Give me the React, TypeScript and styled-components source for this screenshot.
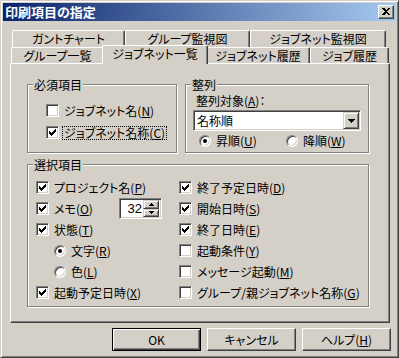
import React from 'react'
import styled, { createGlobalStyle } from 'styled-components'

const GlobalStyle = createGlobalStyle`
    html, body {
        margin: 0;
        padding: 0;
        background: #d4d0c8;
    }
    body {
        font-family: "Noto Sans CJK JP", "Noto Sans", sans-serif;
        font-size: 12px;
        font-feature-settings: "palt";
        color: #000;
    }
    * { box-sizing: border-box; }
`

const Window = styled.div`
    width: 399px;
    height: 358px;
    background: #d4d0c8;
    border: 1px solid;
    border-color: #d4d0c8 #404040 #404040 #d4d0c8;
    box-shadow: inset 1px 1px #fff, inset -1px -1px #808080;
    padding: 2px;
    display: flex;
    flex-direction: column;
`

const TitleBar = styled.div`
    height: 18px;
    background: linear-gradient(to right, #0a246a, #a6caf0);
    display: flex;
    align-items: center;
    justify-content: space-between;
    padding: 0 2px 0 2px;
`

const TitleText = styled.span`
    color: #fff;
    font-weight: bold;
    font-size: 13px;
    line-height: 18px;
`

const CloseButton = styled.div`
    width: 16px;
    height: 14px;
    background: #d4d0c8;
    border: 1px solid;
    border-color: #fff #404040 #404040 #fff;
    box-shadow: inset -1px -1px #808080;
    display: flex;
    align-items: center;
    justify-content: center;
    margin-top: -1px;
`

const Body = styled.div`
    padding: 9px 5px 4px 7px;
    display: flex;
    flex-direction: column;
`

const TabRow = styled.div<{ $indent: number; $h: number }>`
    display: flex;
    height: ${p => p.$h}px;
    margin-left: ${p => p.$indent}px;
`

const Tab = styled.div<{ $w: number; $active?: boolean }>`
    width: ${p => p.$w}px;
    height: ${p => (p.$active ? 'calc(100% + 3px)' : '100%')};
    margin: ${p => (p.$active ? '-2px -2px -1px -2px' : '0')};
    width: ${p => (p.$active ? p.$w + 4 : p.$w)}px;
    position: relative;
    z-index: ${p => (p.$active ? 2 : 1)};
    background: #d4d0c8;
    border-top: 1px solid #fff;
    border-left: 1px solid #fff;
    border-right: 1px solid #404040;
    box-shadow: inset -1px 0 #808080;
    border-radius: 2px 2px 0 0;
    display: flex;
    align-items: center;
    justify-content: center;
    line-height: 14px;
    padding-bottom: ${p => (p.$active ? 2 : 0)}px;
    white-space: nowrap;
`

const Panel = styled.div`
    width: 380px;
    height: 260px;
    border: 1px solid;
    border-color: #fff #404040 #404040 #fff;
    box-shadow: inset -1px -1px #808080;
    padding: 20px 0 0 16px;
    display: flex;
    flex-direction: column;
    gap: 11px;
`

const TopGroups = styled.div`
    display: flex;
    gap: 8px;
`

const GroupBox = styled.div<{ $w: number; $h: number }>`
    width: ${p => p.$w}px;
    height: ${p => p.$h}px;
    border: 1px solid #808080;
    box-shadow: 1px 1px 0 #fff, inset 1px 1px 0 #fff;
    display: flex;
    flex-direction: column;
`

const GroupTitle = styled.div`
    width: fit-content;
    margin: -7px 0 0 5px;
    padding: 0 1px;
    height: 13px;
    line-height: 13px;
    background: #d4d0c8;
    white-space: nowrap;
`

const GroupBody = styled.div<{ $pt: number; $pl: number }>`
    padding: ${p => p.$pt}px 0 0 ${p => p.$pl}px;
    display: flex;
    flex-direction: column;
`

const Row = styled.div<{ $gap?: number; $indent?: number }>`
    height: 21px;
    display: flex;
    align-items: center;
    gap: ${p => p.$gap ?? 4}px;
    margin-left: ${p => p.$indent ?? 0}px;
    white-space: nowrap;
    line-height: 13px;
`

const Label = styled.span<{ $focus?: boolean }>`
    line-height: 12px;
    padding: 0 1px;
    border: 1px ${p => (p.$focus ? 'dotted #000' : 'solid transparent')};
    margin-left: -1px;
`

const U = styled.span`
    text-decoration: underline;
    text-underline-offset: 1px;
`

const Box = styled.span`
    width: 13px;
    height: 13px;
    flex: none;
    background: #fff;
    border: 1px solid;
    border-color: #808080 #fff #fff #808080;
    box-shadow: inset 1px 1px #404040, inset -1px -1px #d4d0c8;
    display: flex;
    align-items: center;
    justify-content: center;
`

const RadioCircle = styled.span`
    width: 12px;
    height: 12px;
    flex: none;
    border-radius: 50%;
    background: #fff;
    border: 1px solid;
    border-color: #808080 #fff #fff #808080;
    box-shadow: inset 1px 1px #404040, inset -1px -1px #d4d0c8;
    display: flex;
    align-items: center;
    justify-content: center;
`

const Dot = styled.span`
    width: 4px;
    height: 4px;
    border-radius: 50%;
    background: #000;
`

const SortLabel = styled.div`
    height: 13px;
    line-height: 13px;
    margin: 3px 0 0 10px;
`

const Combo = styled.div`
    width: 168px;
    height: 21px;
    margin: 3px 0 0 7px;
    background: #fff;
    border: 1px solid;
    border-color: #808080 #fff #fff #808080;
    box-shadow: inset 1px 1px #404040, inset -1px -1px #d4d0c8;
    padding: 1px 1px 1px 3px;
    display: flex;
    align-items: center;
    justify-content: space-between;
`

const DropButton = styled.div`
    width: 16px;
    height: 17px;
    background: #d4d0c8;
    border: 1px solid;
    border-color: #d4d0c8 #404040 #404040 #d4d0c8;
    box-shadow: inset 1px 1px #fff, inset -1px -1px #808080;
    display: flex;
    align-items: center;
    justify-content: center;
`

const RadioLine = styled.div`
    display: flex;
    margin: 3px 0 0 13px;
    height: 13px;
`

const RadioSlot = styled.div<{ $w: number }>`
    width: ${p => p.$w}px;
    display: flex;
    align-items: center;
    gap: 4px;
    white-space: nowrap;
    line-height: 13px;
`

const Columns = styled.div`
    display: grid;
    grid-template-columns: 143px 1fr;
`

const Column = styled.div`
    display: flex;
    flex-direction: column;
`

const MemoRow = styled(Row)`
    width: 126px;
    justify-content: space-between;
`

const CheckPart = styled.span`
    display: flex;
    align-items: center;
    gap: 4px;
`

const SpinEdit = styled.div`
    width: 43px;
    height: 21px;
    background: #fff;
    border: 1px solid;
    border-color: #808080 #fff #fff #808080;
    box-shadow: inset 1px 1px #404040, inset -1px -1px #d4d0c8;
    padding: 2px 2px 2px 2px;
    display: flex;
    align-items: center;
    justify-content: space-between;
`

const SpinValue = styled.span`
    flex: 1;
    text-align: right;
    padding-right: 1px;
    font-family: "Liberation Sans", Arial, sans-serif;
    font-size: 13px;
    line-height: 13px;
`

const SpinButtons = styled.div`
    display: flex;
    flex-direction: column;
    width: 16px;
    height: 17px;
`

const SpinBtn = styled.div`
    flex: 1;
    background: #d4d0c8;
    border: 1px solid;
    border-color: #d4d0c8 #404040 #404040 #d4d0c8;
    box-shadow: inset 1px 1px #fff, inset -1px -1px #808080;
    display: flex;
    align-items: center;
    justify-content: center;
`

const ButtonRow = styled.div`
    display: flex;
    justify-content: flex-end;
    gap: 6px;
    margin-top: 5px;
`

const PushButton = styled.div<{ $default?: boolean }>`
    width: 89px;
    height: 23px;
    background: #d4d0c8;
    border: 1px solid;
    border-color: ${p => (p.$default ? '#000' : '#fff #404040 #404040 #fff')};
    box-shadow: ${p =>
        p.$default
            ? 'inset 1px 1px #fff, inset -1px -1px #404040, inset -2px -2px #808080'
            : 'inset -1px -1px #808080'};
    display: flex;
    align-items: center;
    justify-content: center;
    line-height: 13px;
    padding-bottom: 1px;
`

const CheckMark = () => (
    <svg width="7" height="7" viewBox="0 0 7 7" shapeRendering="crispEdges">
        <path
            d="M0 2h1v3H0z M1 3h1v3H1z M2 4h1v3H2z M3 3h1v3H3z M4 2h1v3H4z M5 1h1v3H5z M6 0h1v3H6z"
            fill="#000"
        />
    </svg>
)

const Arrow = ({ up, size = 7 }: { up?: boolean; size?: number }) => {
    const h = Math.ceil(size / 2)
    return (
        <svg width={size} height={h} viewBox={`0 0 ${size} ${h}`} shapeRendering="crispEdges">
            <polygon
                points={up ? `${size / 2},0 ${size},${h} 0,${h}` : `0,0 ${size},0 ${size / 2},${h}`}
                fill="#000"
            />
        </svg>
    )
}

function Check({ checked, children, focus }: { checked?: boolean; children: React.ReactNode; focus?: boolean }) {
    return (
        <CheckPart>
            <Box>{checked && <CheckMark />}</Box>
            <Label $focus={focus}>{children}</Label>
        </CheckPart>
    )
}

function Radio({ on, children }: { on?: boolean; children: React.ReactNode }) {
    return (
        <>
            <RadioCircle>{on && <Dot />}</RadioCircle>
            <Label>{children}</Label>
        </>
    )
}

export default function App() {
    return (
        <>
            <GlobalStyle />
            <Window>
                <TitleBar>
                    <TitleText>印刷項目の指定</TitleText>
                    <CloseButton>
                        <svg width="8" height="7" viewBox="0 0 8 7" shapeRendering="crispEdges">
                            <path d="M0 0h2l2 2 2-2h2L5 3.5 8 7H6L4 5 2 7H0l3-3.5z" fill="#000" />
                        </svg>
                    </CloseButton>
                </TitleBar>

                <Body>
                    <TabRow $indent={2} $h={17}>
                        <Tab $w={113}>ガントチャート</Tab>
                        <Tab $w={125}>グループ監視図</Tab>
                        <Tab $w={136}>ジョブネット監視図</Tab>
                    </TabRow>
                    <TabRow $indent={1} $h={16}>
                        <Tab $w={93}>グループ一覧</Tab>
                        <Tab $w={102} $active>ジョブネット一覧</Tab>
                        <Tab $w={104}>ジョブネット履歴</Tab>
                        <Tab $w={79}>ジョブ履歴</Tab>
                    </TabRow>

                    <Panel>
                        <TopGroups>
                            <GroupBox $w={150} $h={69}>
                                <GroupTitle>必須項目</GroupTitle>
                                <GroupBody $pt={9} $pl={18}>
                                    <Row>
                                        <Check>ジョブネット名(<U>N</U>)</Check>
                                    </Row>
                                    <Row style={{ marginTop: 1 }}>
                                        <Check checked focus>ジョブネット名称(<U>C</U>)</Check>
                                    </Row>
                                </GroupBody>
                            </GroupBox>

                            <GroupBox $w={184} $h={69}>
                                <GroupTitle>整列</GroupTitle>
                                <SortLabel>整列対象(<U>A</U>)：</SortLabel>
                                <Combo>
                                    <span>名称順</span>
                                    <DropButton>
                                        <Arrow />
                                    </DropButton>
                                </Combo>
                                <RadioLine>
                                    <RadioSlot $w={87}>
                                        <Radio on>昇順(<U>U</U>)</Radio>
                                    </RadioSlot>
                                    <RadioSlot $w={80}>
                                        <Radio>降順(<U>W</U>)</Radio>
                                    </RadioSlot>
                                </RadioLine>
                            </GroupBox>
                        </TopGroups>

                        <GroupBox $w={342} $h={143}>
                            <GroupTitle>選択項目</GroupTitle>
                            <GroupBody $pt={6} $pl={8}>
                                <Columns>
                                    <Column>
                                        <Row>
                                            <Check checked>プロジェクト名(<U>P</U>)</Check>
                                        </Row>
                                        <MemoRow>
                                            <Check checked>メモ(<U>O</U>)</Check>
                                            <SpinEdit>
                                                <SpinValue>32</SpinValue>
                                                <SpinButtons>
                                                    <SpinBtn>
                                                        <Arrow up size={5} />
                                                    </SpinBtn>
                                                    <SpinBtn>
                                                        <Arrow size={5} />
                                                    </SpinBtn>
                                                </SpinButtons>
                                            </SpinEdit>
                                        </MemoRow>
                                        <Row>
                                            <Check checked>状態(<U>T</U>)</Check>
                                        </Row>
                                        <Row $indent={18}>
                                            <Radio on>文字(<U>R</U>)</Radio>
                                        </Row>
                                        <Row $indent={18}>
                                            <Radio>色(<U>L</U>)</Radio>
                                        </Row>
                                        <Row>
                                            <Check checked>起動予定日時(<U>X</U>)</Check>
                                        </Row>
                                    </Column>
                                    <Column>
                                        <Row>
                                            <Check checked>終了予定日時(<U>D</U>)</Check>
                                        </Row>
                                        <Row>
                                            <Check checked>開始日時(<U>S</U>)</Check>
                                        </Row>
                                        <Row>
                                            <Check checked>終了日時(<U>E</U>)</Check>
                                        </Row>
                                        <Row>
                                            <Check>起動条件(<U>Y</U>)</Check>
                                        </Row>
                                        <Row>
                                            <Check>メッセージ起動(<U>M</U>)</Check>
                                        </Row>
                                        <Row>
                                            <Check>グループ/親ジョブネット名称(<U>G</U>)</Check>
                                        </Row>
                                    </Column>
                                </Columns>
                            </GroupBody>
                        </GroupBox>
                    </Panel>

                    <ButtonRow>
                        <PushButton $default>OK</PushButton>
                        <PushButton>キャンセル</PushButton>
                        <PushButton>ヘルプ(<U>H</U>)</PushButton>
                    </ButtonRow>
                </Body>
            </Window>
        </>
    )
}
